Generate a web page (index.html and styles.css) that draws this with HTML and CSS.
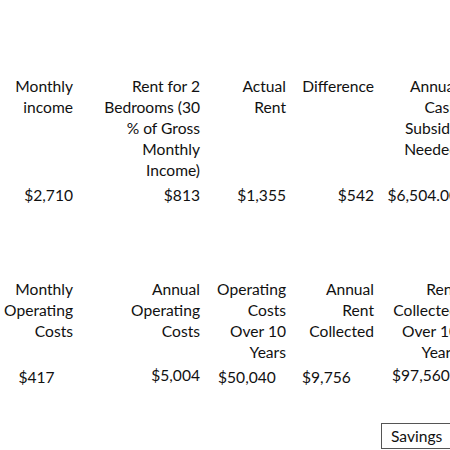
FILE: index.html
```html
<!DOCTYPE html>
<html>
<head>
<meta charset="utf-8">
<link rel="stylesheet" href="styles.css">
</head>
<body>
<div class="sheet">
  <div class="table top">
    <div class="cell h r">Monthly<br>income</div>
    <div class="cell h r">Rent for 2<br>Bedrooms (30<br>% of Gross<br>Monthly<br>Income)</div>
    <div class="cell h r">Actual<br>Rent</div>
    <div class="cell h r">Difference</div>
    <div class="cell h r">Annual<br>Cash<br>Subsidy<br>Needed</div>
    <div class="cell v r">$2,710</div>
    <div class="cell v r">$813</div>
    <div class="cell v r">$1,355</div>
    <div class="cell v r">$542</div>
    <div class="cell v r">$6,504.00</div>
  </div>
  <div class="table bottom">
    <div class="cell h r">Monthly<br>Operating<br>Costs</div>
    <div class="cell h r">Annual<br>Operating<br>Costs</div>
    <div class="cell h r">Operating<br>Costs<br>Over 10<br>Years</div>
    <div class="cell h r">Annual<br>Rent<br>Collected</div>
    <div class="cell h r">Rent<br>Collected<br>Over 10<br>Years</div>
    <div class="cell v c">$417</div>
    <div class="cell v r up">$5,004</div>
    <div class="cell v l p3">$50,040</div>
    <div class="cell v l p4">$9,756</div>
    <div class="cell v l p5 up">$97,560</div>
  </div>
  <div class="savings-row">
    <div class="savings">Savings</div>
  </div>
</div>
</body>
</html>
```
FILE: styles.css
```css
html, body {
  margin: 0;
  padding: 0;
  background: #ffffff;
  overflow: hidden;
}
.sheet {
  width: 480px;
  padding-top: 76px;
  font-family: Lato, "Noto Sans", sans-serif;
  font-size: 15.6px;
  line-height: 21px;
  color: #111111;
}
.table {
  display: grid;
  grid-template-columns: 73px 127px 86px 88px 84px;
  column-gap: 0;
}
.top .v { margin-top: 4px; }
.bottom { margin-top: 73px; }
.bottom .v { margin-top: 4px; }
.cell { white-space: nowrap; }
.r { text-align: right; }
.l { text-align: left; }
.c { text-align: center; }
.up { position: relative; top: -2px; }
.p3 { padding-left: 18px; }
.p4 { padding-left: 16px; }
.p5 { padding-left: 18px; }
.savings-row {
  margin-top: 35px;
  padding-left: 381px;
}
.savings {
  width: 90px;
  height: 24px;
  border: 1px solid #555;
  padding-left: 9px;
  line-height: 24px;
}
```
